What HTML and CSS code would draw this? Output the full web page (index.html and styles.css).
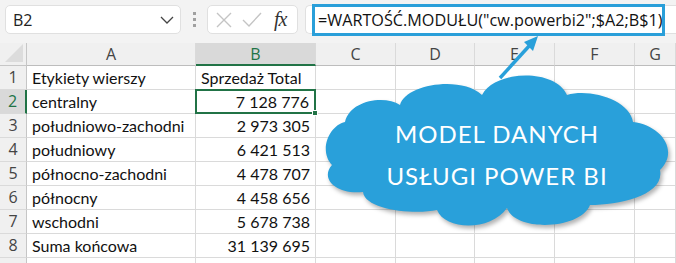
FILE: index.html
```html
<!DOCTYPE html>
<html lang="pl">
<head>
    <meta charset="UTF-8">
    <meta name="viewport" content="width=device-width, initial-scale=1.0">
    <title>WARTOŚĆ.MODUŁU</title>
    <link rel="stylesheet" href="styles.css">
</head>
<body>
    <div class="toolbar">
        <div class="name-box">
            <span>B2</span>
            <svg class="chevron" width="14" height="8" viewBox="0 0 14 8"><path d="M1 1 L7 7 L13 1" fill="none" stroke="#444" stroke-width="1.3"/></svg>
        </div>
        <div class="grip"><i></i><i></i><i></i></div>
        <div class="fx-box">
            <svg width="18" height="18" viewBox="0 0 18 18"><path d="M2 2 L16 16 M16 2 L2 16" stroke="#c4c4c4" stroke-width="1.4" fill="none"/></svg>
            <svg width="20" height="18" viewBox="0 0 20 18"><path d="M1 9 L7 15 L19 2" stroke="#c4c4c4" stroke-width="1.4" fill="none"/></svg>
            <span class="fx">fx</span>
        </div>
        <div class="formula-bar">
            <div class="formula">=WARTOŚĆ.MODUŁU("cw.powerbi2";$A2;B$1)</div>
        </div>
    </div>

    <div class="sheet">
        <div class="corner"><svg width="20" height="18" viewBox="0 0 20 18"><path d="M20 0 L20 18 L2 18 Z" fill="#dcdcdc"/></svg></div>
        <div class="col-head">A</div>
        <div class="col-head active">B</div>
        <div class="col-head">C</div>
        <div class="col-head">D</div>
        <div class="col-head">E</div>
        <div class="col-head">F</div>
        <div class="col-head">G</div>

        <div class="row-head">1</div>
        <div class="cell">Etykiety wierszy</div>
        <div class="cell">Sprzedaż Total</div>
        <div class="cell"></div><div class="cell"></div><div class="cell"></div><div class="cell"></div><div class="cell"></div>

        <div class="row-head active">2</div>
        <div class="cell">centralny</div>
        <div class="cell num selected">7 128 776<span class="handle"></span></div>
        <div class="cell"></div><div class="cell"></div><div class="cell"></div><div class="cell"></div><div class="cell"></div>

        <div class="row-head">3</div>
        <div class="cell">południowo-zachodni</div>
        <div class="cell num">2 973 305</div>
        <div class="cell"></div><div class="cell"></div><div class="cell"></div><div class="cell"></div><div class="cell"></div>

        <div class="row-head">4</div>
        <div class="cell">południowy</div>
        <div class="cell num">6 421 513</div>
        <div class="cell"></div><div class="cell"></div><div class="cell"></div><div class="cell"></div><div class="cell"></div>

        <div class="row-head">5</div>
        <div class="cell">północno-zachodni</div>
        <div class="cell num">4 478 707</div>
        <div class="cell"></div><div class="cell"></div><div class="cell"></div><div class="cell"></div><div class="cell"></div>

        <div class="row-head">6</div>
        <div class="cell">północny</div>
        <div class="cell num">4 458 656</div>
        <div class="cell"></div><div class="cell"></div><div class="cell"></div><div class="cell"></div><div class="cell"></div>

        <div class="row-head">7</div>
        <div class="cell">wschodni</div>
        <div class="cell num">5 678 738</div>
        <div class="cell"></div><div class="cell"></div><div class="cell"></div><div class="cell"></div><div class="cell"></div>

        <div class="row-head">8</div>
        <div class="cell">Suma końcowa</div>
        <div class="cell num">31 139 695</div>
        <div class="cell"></div><div class="cell"></div><div class="cell"></div><div class="cell"></div><div class="cell"></div>

        <div class="row-head"></div>
        <div class="cell"></div><div class="cell"></div><div class="cell"></div><div class="cell"></div><div class="cell"></div><div class="cell"></div><div class="cell"></div>
    </div>

    <div class="highlight"></div>

    <svg class="callout" width="676" height="263" viewBox="0 0 676 263">
        <path class="cloud" d="M332 165 C318 150 330 125 345 122 C350 100 385 95 400 105 C405 85 460 75 482 95 C495 70 555 68 567 95 C590 88 630 100 633 122 C660 125 680 150 660 170 C665 195 620 205 590 205 C580 230 515 232 507 208 C490 232 445 230 437 210 C415 215 365 210 363 192 C335 195 320 178 332 165 Z"/>
        <path class="arrow-line" d="M500 78 L530 45"/>
        <path class="arrow-head" d="M538 36 L524 42 L533 51 Z"/>
        <text class="cloud-text" x="497" y="143">MODEL DANYCH</text>
        <text class="cloud-text" x="497" y="185">USŁUGI POWER BI</text>
    </svg>
</body>
</html>
```

FILE: styles.css
```css
* {
    margin: 0;
    padding: 0;
    box-sizing: border-box;
}

body {
    font-family: 'Open Sans', 'Noto Sans', sans-serif;
    background: #ffffff;
    width: 676px;
    height: 263px;
    overflow: hidden;
    position: relative;
}

.toolbar {
    height: 43px;
    background: #f3f3f3;
    display: flex;
    align-items: flex-start;
    padding: 5px 0 0 5px;
}

.name-box {
    width: 176px;
    height: 29px;
    background: white;
    border: 1px solid #e0e0e0;
    border-radius: 5px;
    display: flex;
    align-items: center;
    justify-content: space-between;
    padding: 0 6px 0 7px;
    font-size: 16px;
    color: #222;
}

.grip {
    width: 26px;
    height: 29px;
    display: flex;
    flex-direction: column;
    align-items: center;
    justify-content: center;
    gap: 3px;
}

.grip i {
    display: block;
    width: 3px;
    height: 3px;
    background: #a0a0a0;
}

.fx-box {
    width: 91px;
    height: 29px;
    background: white;
    border: 1px solid #e0e0e0;
    border-radius: 5px;
    display: flex;
    align-items: center;
    gap: 9px;
    padding-left: 7px;
}

.fx {
    font-family: 'Liberation Serif', serif;
    font-style: italic;
    font-size: 20px;
    color: #333;
    margin-left: 3px;
    letter-spacing: -1px;
}

.formula-bar {
    margin-left: 7px;
    flex: 1;
    height: 29px;
    background: white;
    border: 1px solid #e0e0e0;
    border-right: none;
    border-radius: 5px 0 0 5px;
    display: flex;
    align-items: center;
    padding-left: 12px;
}

.formula {
    font-size: 16.2px;
    color: #111;
    white-space: nowrap;
}

.highlight {
    position: absolute;
    left: 312px;
    top: 4px;
    width: 353px;
    height: 32px;
    border: 3px solid #2a9fd9;
}

.sheet {
    display: grid;
    grid-template-columns: 27px 169px 120px 80px 79px 80px 80px 41px;
    grid-template-rows: 23px repeat(9, 24px);
}

.corner {
    background: #f0f0f0;
    border-bottom: 1px solid #c6c6c6;
    border-right: 1px solid #c6c6c6;
    display: flex;
    align-items: flex-end;
    justify-content: flex-end;
    padding: 0 3px 3px 0;
}

.col-head {
    background: #f0f0f0;
    border-bottom: 1px solid #bdbdbd;
    border-right: 1px solid #dadada;
    text-align: center;
    font-size: 16px;
    line-height: 22px;
    color: #444;
}

.col-head.active {
    background: #d9d9d9;
    border-bottom: 2px solid #217346;
    color: #217346;
}

.row-head {
    background: #f0f0f0;
    border-bottom: 1px solid #dadada;
    border-right: 1px solid #c6c6c6;
    text-align: center;
    font-size: 16px;
    line-height: 23px;
    color: #444;
}

.row-head.active {
    background: #d9d9d9;
    border-right: 2px solid #217346;
    color: #217346;
}

.cell {
    border-right: 1px solid #dadada;
    border-bottom: 1px solid #dadada;
    font-family: 'Lato', sans-serif;
    font-size: 16px;
    line-height: 23px;
    color: #111;
    padding: 0 4px 0 5px;
    white-space: nowrap;
}

.cell.num {
    text-align: right;
    padding-right: 5px;
}

.cell.selected {
    position: relative;
    border: 2px solid #217346;
    margin: -1px 0 0 -1px;
    line-height: 21px;
}

.handle {
    position: absolute;
    right: -4px;
    bottom: -4px;
    width: 6px;
    height: 6px;
    background: #217346;
    border: 1px solid white;
}

.callout {
    position: absolute;
    left: 0;
    top: 0;
}

.cloud {
    fill: #29a0da;
    filter: drop-shadow(2px 3px 2px rgba(0, 0, 0, 0.3));
}

.arrow-line {
    stroke: #29a0da;
    stroke-width: 3.5;
    fill: none;
}

.arrow-head {
    fill: #29a0da;
}

.cloud-text {
    font-family: 'Lato', sans-serif;
    font-weight: 400;
    font-size: 24px;
    fill: white;
    text-anchor: middle;
    letter-spacing: 1px;
}
```
